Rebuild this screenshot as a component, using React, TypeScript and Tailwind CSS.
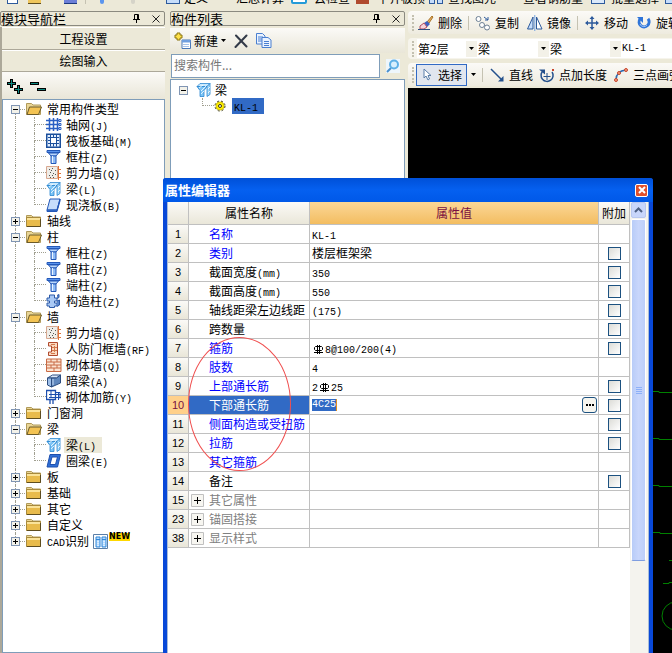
import React from 'react';
import clsx from 'clsx';

type IconName =
  | 'axis' | 'raft' | 'column' | 'shear' | 'beam' | 'slab' | 'struct'
  | 'door' | 'brick' | 'hidden' | 'rebar' | 'ring';

interface TreeItem {
  label: string;
  icon: IconName;
  selected?: boolean;
}

interface TreeGroup {
  label: string;
  items?: TreeItem[];
  isNew?: boolean;
}

interface Property {
  no: number;
  name: string;
  value?: string;
  tone?: 'blue' | 'gray';
  check?: boolean;
  group?: boolean;
  editing?: boolean;
}

const groups: TreeGroup[] = [
  {
    label: '常用构件类型',
    items: [
      { label: '轴网(J)', icon: 'axis' },
      { label: '筏板基础(M)', icon: 'raft' },
      { label: '框柱(Z)', icon: 'column' },
      { label: '剪力墙(Q)', icon: 'shear' },
      { label: '梁(L)', icon: 'beam' },
      { label: '现浇板(B)', icon: 'slab' },
    ],
  },
  { label: '轴线' },
  {
    label: '柱',
    items: [
      { label: '框柱(Z)', icon: 'column' },
      { label: '暗柱(Z)', icon: 'column' },
      { label: '端柱(Z)', icon: 'column' },
      { label: '构造柱(Z)', icon: 'struct' },
    ],
  },
  {
    label: '墙',
    items: [
      { label: '剪力墙(Q)', icon: 'shear' },
      { label: '人防门框墙(RF)', icon: 'door' },
      { label: '砌体墙(Q)', icon: 'brick' },
      { label: '暗梁(A)', icon: 'hidden' },
      { label: '砌体加筋(Y)', icon: 'rebar' },
    ],
  },
  { label: '门窗洞' },
  {
    label: '梁',
    items: [
      { label: '梁(L)', icon: 'beam', selected: true },
      { label: '圈梁(E)', icon: 'ring' },
    ],
  },
  { label: '板' },
  { label: '基础' },
  { label: '其它' },
  { label: '自定义' },
  { label: 'CAD识别', isNew: true },
];

const properties: Property[] = [
  { no: 1, name: '名称', value: 'KL-1', tone: 'blue' },
  { no: 2, name: '类别', value: '楼层框架梁', tone: 'blue', check: true },
  { no: 3, name: '截面宽度(mm)', value: '350', check: true },
  { no: 4, name: '截面高度(mm)', value: '550', check: true },
  { no: 5, name: '轴线距梁左边线距', value: '(175)', check: true },
  { no: 6, name: '跨数量', check: true },
  { no: 7, name: '箍筋', value: 'Φ8@100/200(4)', tone: 'blue', check: true },
  { no: 8, name: '肢数', value: '4', tone: 'blue' },
  { no: 9, name: '上部通长筋', value: '2Φ25', tone: 'blue', check: true },
  { no: 10, name: '下部通长筋', value: '4C25', check: true, editing: true },
  { no: 11, name: '侧面构造或受扭筋', tone: 'blue', check: true },
  { no: 12, name: '拉筋', tone: 'blue', check: true },
  { no: 13, name: '其它箍筋', tone: 'blue' },
  { no: 14, name: '备注', check: true },
  { no: 15, name: '其它属性', tone: 'gray', group: true },
  { no: 23, name: '锚固搭接', tone: 'gray', group: true },
  { no: 38, name: '显示样式', tone: 'gray', group: true },
];

const RebarSign = () => (
  <svg width="9" height="9" viewBox="0 0 9 9" className="mx-0.5 inline-block align-[-1px]" fill="none" stroke="#000" role="img" aria-label="HRB400">
    <path d="M3.500 0v9M5.500 0v9M1.500 1.500h6l1 1v2l-1 1h-6l-1-1v-2zM0 7.500h9" />
  </svg>
);

// Latin runs are set half as wide as a Chinese character
const Txt = ({ children }: { children: string }) => (
  <>
    {children.split(/([\x20-\x7e]+|Φ)/).filter(Boolean).map((part, i) =>
      part === 'Φ' ? (
        <RebarSign key={i} />
      ) : /^[\x20-\x7e]/.test(part) ? (
        <span key={i} className="font-['Liberation_Mono',monospace] text-[10px] leading-none">{part}</span>
      ) : (
        part
      )
    )}
  </>
);

const shapes: Record<IconName, React.ReactNode> = {
  axis: (
    <g stroke="#2a5fc4" fill="none">
      <path d="M3.500 1v13M7.500 1v13M11.500 1v13M0 3.500h13M0 7.500h13M0 11.500h13" strokeWidth="1.500" />
      <path d="M13 2.500h2v2h-2zM13 6.500h2v2h-2zM13 10.500h2v2h-2z" />
    </g>
  ),
  raft: (
    <g stroke="#1b4f9c" fill="none">
      <rect x=".75" y="1.250" width="13.500" height="13" fill="#e4f0ff" strokeWidth="1.500" />
      <rect x="4.500" y="4.500" width="6" height="6" fill="#fff" />
      <path d="M4.500 2v2M7.500 2v2M10.500 2v2M4.500 11v2.500M7.500 11v2.500M10.500 11v2.500M2 4.500h2M2 7.500h2M2 10.500h2M11 4.500h2M11 7.500h2M11 10.500h2" />
    </g>
  ),
  column: (
    <g stroke="#2458b8">
      <path d="M1 1.500h13v2H1z" fill="#5b95ee" />
      <path d="M2.500 4h10l-2.500 3H5z" fill="#b9d6fb" />
      <path d="M5 7h5v7.500H5z" fill="#8fbcf7" />
      <path d="M6.500 7v7" stroke="#eaf4ff" />
    </g>
  ),
  shear: (
    <g>
      <path d="M.5 1.500h11v12H.5z" fill="#efede8" stroke="#d8a890" />
      <path d="M3 4.500h1M6 3.500h1M9 5.500h1M4 7.500h1M7 8.500h1M3 10.500h1M6 10.500h1M9 9.500h1M4 12.500h1M7 12.500h1M5 5.500h1" stroke="#555" />
      <path d="M12.500 1v14M12 4.500h3M12 8.500h3M12 12.500h3" stroke="#e0743a" fill="none" />
    </g>
  ),
  beam: (
    <g stroke="#2a86d0" strokeWidth=".8">
      <path d="M1 4.500l3-3h10l-3 3z" fill="#c9e9fd" />
      <path d="M1 4.500h10l-3 4v6H4v-6z" fill="#7cc4f5" />
      <path d="M11 4.500l3-3v11l-3 2z" fill="#a6dafa" />
      <path d="M3 6l4-3M5 9l5-5M5 12l3-3M12 7l2-2M12 11l2-2" stroke="#fff" fill="none" />
    </g>
  ),
  slab: (
    <g stroke="#2458b8">
      <path d="M4 2h10l-3 11H1z" fill="#c6ddfb" />
      <path d="M1 13v1.500h10L14 4V2l-3 11z" fill="#3b74d0" />
    </g>
  ),
  struct: (
    <g stroke="#2d5aa8">
      <path d="M3.500 2h5v3H11v3H8.500v2H11v3H8.500v1.500h-5V13H1v-3h2.500V8H1V5h2.500z" fill="#a9c9f5" />
      <path d="M11 2.500l2-1v3l-2 1M11 8l2.500-1v5L11 13.500" fill="#5b86cc" />
    </g>
  ),
  door: (
    <g stroke="#b04a2e">
      <path d="M2.500 1.500h9V14.500h-9v-3.500h3V5h-3z" fill="#fbd9c0" />
      <path d="M5 3.500h4M5 12.500h4M8.500 5v6M6 6.500h5M6 9.500h5" stroke="#d47a4e" />
    </g>
  ),
  brick: (
    <g stroke="#c86a45">
      <path d="M.5 2h14.500v12.500H.5z" fill="#fbe3d0" />
      <path d="M.5 5h14.500M.5 8h14.500M.5 11h14.500M5 2v3M11 2v3M8 5v3M5 8v3M11 8v3M8 11v3" />
    </g>
  ),
  hidden: (
    <g stroke="#2c4d80">
      <path d="M1.500 5l5-3h8l-4 3z" fill="#dbe9fa" />
      <path d="M1.500 5h4v9l-4-2z" fill="#9fc0ea" />
      <path d="M5.500 5h5l4-3v8l-9 4z" fill="#5f87bd" />
      <path d="M7 6v6" stroke="#c7dbf5" />
    </g>
  ),
  rebar: (
    <g stroke="#1d4fae" fill="none">
      <path d="M.5 1.500h9v9h-9zM4 10v5M7 10v5" strokeWidth="1.300" />
      <path d="M3 5.500h12M5 1v8M3 8.500h12M10 3.500h4v6M12.500 3v8" />
    </g>
  ),
  ring: (
    <g stroke="#1d4fae">
      <path d="M4 1.500h10.500l-3 12.500H1z" fill="#2f6fd6" />
      <path d="M6 4h5.500L9.500 11.500H4z" fill="#fff" />
    </g>
  ),
};

const Icon = ({ name }: { name: IconName }) => (
  <svg width="16" height="16" viewBox="0 0 16 16" className="shrink-0">{shapes[name]}</svg>
);

const Folder = ({ open }: { open?: boolean }) => (
  <svg width="16" height="16" viewBox="0 0 16 16" className="shrink-0">
    <path d="M.5 13.500v-11h5l1.500 1.500h7.500v9.500z" fill="#e9d595" stroke="#b09a5a" />
    {open ? (
      <path d="M3.500 6h12l-3 7.500H1z" fill="#f3c353" stroke="#6b5a2a" />
    ) : (
      <>
        <path d="M.5 4.500h14v9H.5z" fill="#e8bb4c" stroke="#a88a3c" />
        <path d="M1 5h13v2H1z" fill="#fae39a" />
        <path d="M1 13.500h13.500V6" fill="none" stroke="#5e4d20" />
      </>
    )}
  </svg>
);

const Expander = ({ open }: { open?: boolean }) => (
  <svg width="9" height="9" viewBox="0 0 9 9" className="shrink-0">
    <rect x=".5" y=".5" width="8" height="8" fill="#f3f2ea" stroke="#8095b3" />
    <path d={open ? 'M2 4.500h5' : 'M2 4.500h5M4.500 2v5'} stroke="#000" />
  </svg>
);

const Elbow = ({ last }: { last: boolean }) => (
  <div className="w-3 shrink-0">
    <div className="h-2 border-b border-l border-dotted border-[#a09f90]" />
    <div className={clsx('h-2', !last && 'border-l border-dotted border-[#a09f90]')} />
  </div>
);

const Group = ({ group, first, last }: { group: TreeGroup; first: boolean; last: boolean }) => (
  <li>
    <div className="flex h-4 items-center">
      <div className="flex h-4 w-[9px] flex-col items-center">
        <i className={clsx('flex-1', !first && 'border-l border-dotted border-[#a09f90]')} />
        <Expander open={!!group.items} />
        <i className={clsx('flex-1', !last && 'border-l border-dotted border-[#a09f90]')} />
      </div>
      <i className="mr-px w-[5px] border-t border-dotted border-[#a09f90]" />
      <Folder open={!!group.items} />
      <span className="ml-[5px] h-4"><Txt>{group.label}</Txt></span>
      {group.isNew && (
        <>
          <svg width="15" height="15" viewBox="0 0 15 15" className="ml-1">
            <path d="M.5.5h14v14H.5z" fill="#fff" stroke="#5a7fa8" />
            <path d="M3 3h4v10H3zM9 3h4v10H9zM3 5.500h4M9 5.500h4" fill="#b8dcff" stroke="#2f86d8" />
            <path d="M5 7v5M11 7v5" stroke="#fff" strokeDasharray="1 1" />
          </svg>
          <span className="ml-px self-start bg-[#ffd800] font-['DejaVu_Sans',sans-serif] text-[8px] leading-2 font-bold">NEW</span>
        </>
      )}
    </div>
    {group.items && (
      <ul>
        {group.items.map((item, i) => (
          <li key={i} className="flex h-4 items-center">
            <div className="flex h-4 w-[9px] justify-center">
              <i className="border-l border-dotted border-[#a09f90]" />
            </div>
            <div className="w-3.5" />
            <Elbow last={i === group.items!.length - 1} />
            <Icon name={item.icon} />
            <span className={clsx('ml-0.5 h-4 px-0.5', item.selected && 'bg-[#ece9d8] pr-1.5')}>
              <Txt>{item.label}</Txt>
            </span>
          </li>
        ))}
      </ul>
    )}
  </li>
);

const PanelTitle = ({ children }: { children: string }) => (
  <div className="flex h-[15px] items-center justify-end rounded-xs border border-[#8b8a80]">
    <h2 className="mr-auto text-[13px] leading-3">{children}</h2>
    <button type="button" aria-label="固定" className="mr-3">
      <svg width="7" height="9" viewBox="0 0 7 9" fill="none" stroke="#000">
        <path d="M1.500 5V.5h4V5M4.500 0v5M0 5.500h7M3.500 6v3" />
      </svg>
    </button>
    <button type="button" aria-label="关闭" className="mr-1">
      <svg width="8" height="8" viewBox="0 0 8 8" stroke="#222"><path d="M.5.5l7 7M7.500.5l-7 7" /></svg>
    </button>
  </div>
);

const Arrow = () => (
  <svg width="5" height="3" viewBox="0 0 5 3" className="shrink-0"><path d="M0 0h5L2.500 3z" /></svg>
);

const Grip = () => (
  <i className="ml-1 h-4 w-0 shrink-0 border-l-2 border-dotted border-[#c3c0b0]" />
);

const Divider = ({ className }: { className?: string }) => (
  <i className={clsx('h-3.5 w-px shrink-0 bg-[#c5c2b2]', className)} />
);

const Tool = ({ icon, label, className }: { icon: React.ReactNode; label: string; className?: string }) => (
  <button type="button" className={clsx('flex shrink-0 items-center gap-1', className)}>
    <svg width="16" height="16" viewBox="0 0 16 16" fill="none">{icon}</svg>
    {label}
  </button>
);

const Combo = ({ label, value, className }: { label: string; value: string; className?: string }) => (
  <div className={clsx('flex h-[19px] shrink-0 items-center bg-white', className)}>
    <select aria-label={label} className="h-full min-w-0 flex-1 appearance-none pl-px">
      <option>{value}</option>
    </select>
    <span className="flex h-4 w-[11px] items-center justify-center bg-[#f3f1e8]"><Arrow /></span>
  </div>
);

const TopStrip = () => (
  <div className="flex h-1 shrink-0 items-end overflow-hidden leading-3 whitespace-nowrap">
    <i className="ml-[7px] h-3 w-[11px] shrink-0 border border-[#2d5a9c] bg-white" />
    <i className="ml-2.5 h-3 w-[13px] shrink-0 border-b border-[#5e4d20] bg-[#efc65c]" />
    <i className="ml-[23px] h-3 w-[13px] shrink-0 border-b border-[#1c3a80] bg-[#6c7fd8]" />
    <i className="ml-2 h-3 w-px shrink-0 bg-[#c5c2b2]" />
    <i className="ml-[14px] h-3 w-1 shrink-0 rounded-b bg-[#5b95ee]" />
    <i className="ml-[27px] h-3 w-1 shrink-0 rounded-b bg-[#d5d3c8]" />
    <i className="ml-[31px] h-3 w-3.5 shrink-0 border border-[#2d5a9c] bg-[#c6ddfb]" />
    <span className="ml-1">定义</span>
    <span className="ml-7">汇总计算</span>
    <i className="ml-[7px] h-3 w-4 shrink-0 rounded-b-xs border-2 border-[#249bd8] bg-white" />
    <span className="ml-[7px]">云检查</span>
    <i className="ml-1.5 h-3 w-[13px] shrink-0 bg-[#b04a2e]" />
    <span className="ml-2">平齐板顶</span>
    <i className="ml-1 h-3 w-1.5 shrink-0 border border-[#2d5a9c] bg-[#c6ddfb]" />
    <i className="ml-0.5 h-3 w-1.5 shrink-0 border border-[#2d5a9c] bg-[#c6ddfb]" />
    <span className="ml-[5px]">查找图元</span>
    <span className="ml-[27px]">查看钢筋量</span>
    <i className="ml-2 h-3 w-3.5 shrink-0 border border-[#2d5a9c] bg-[#dbe9fa]" />
    <span className="ml-1.5">批量选择</span>
    <i className="ml-1.5 h-3 w-3.5 shrink-0 border border-[#2d5a9c] bg-[#c6ddfb]" />
  </div>
);

const Navigator = () => (
  <aside className="flex w-[165px] shrink-0 flex-col">
    <PanelTitle>模块导航栏</PanelTitle>
    <div className="mt-px flex flex-1 flex-col border-l-2 border-[#aca899]">
      <button type="button" className="h-[23px] border-y border-t-white border-b-[#aca899]">工程设置</button>
      <button type="button" className="h-[22px] border-y border-t-white border-b-[#aca899]">绘图输入</button>
      <div className="flex h-[27px] items-center bg-linear-to-b from-[#fbfaf7] to-[#e9e6d8] pl-1">
        <button type="button" aria-label="全部展开">
          <svg width="18" height="16" viewBox="0 0 18 16">
            <path d="M5.500 1v9M1 5.500h9M12.500 7v9M8 11.500h9" stroke="#000" strokeWidth="3" />
            <path d="M5.500 2v7M2 5.500h7M12.500 8v7M9 11.500h7" stroke="#0b8a80" />
          </svg>
        </button>
        <button type="button" aria-label="全部折叠" className="ml-1.5">
          <svg width="17" height="16" viewBox="0 0 17 16">
            <path d="M0 5.500h9M7 11.500h9" stroke="#000" strokeWidth="3" />
            <path d="M1 5.500h7M8 11.500h7" stroke="#0b8a80" />
          </svg>
        </button>
      </div>
      <ul className="flex-1 border border-[#7f9db9] bg-white pt-px pl-2 leading-4 whitespace-nowrap">
        {groups.map((g, i) => (
          <Group key={g.label} group={g} first={i === 0} last={i === groups.length - 1} />
        ))}
      </ul>
    </div>
  </aside>
);

const ComponentList = () => (
  <section className="ml-[5px] flex w-[235px] shrink-0 flex-col">
    <PanelTitle>构件列表</PanelTitle>
    <div className="mt-0.5 flex h-[25px] items-center bg-linear-to-b from-[#fbfaf7] to-[#e9e6d8] pl-1">
      <button type="button" className="flex items-center">
        <svg width="17" height="17" viewBox="0 0 17 17">
          <path d="M3 1h3v2h2v3H6v2H3V6H1V3h2z" fill="#ffe14a" stroke="#8a7410" />
          <path d="M8 8h8.500v8.500H8z" fill="#fff" stroke="#4a78b8" />
          <path d="M8 8h8.500v2.500H8z" fill="#6f9fe0" />
          <path d="M9 12.500h6M9 14.500h6" stroke="#a8c4ea" />
        </svg>
        <span className="mr-[3px] ml-[3px]">新建</span>
        <Arrow />
      </button>
      <button type="button" aria-label="删除构件" className="ml-2">
        <svg width="14" height="14" viewBox="0 0 14 14" stroke="#333a48" strokeWidth="2" strokeLinecap="round">
          <path d="M2 1.500l10.500 11M12.500 1.500L1.500 13" />
        </svg>
      </button>
      <button type="button" aria-label="复制构件" className="ml-2">
        <svg width="16" height="15" viewBox="0 0 16 15" fill="#eaf3ff" stroke="#4a7fd0">
          <path d="M.5.5h6L9 3v8H.5z" />
          <path d="M2 4h5M2 6h5M2 8h5" />
          <path d="M6 4.500h6L15 7v7.500H6z" />
          <path d="M8 8.500h5M8 10.500h5M8 12.500h5" />
        </svg>
      </button>
    </div>
    <div className="flex h-[26px] items-center pl-px">
      <input
        type="search"
        aria-label="搜索构件"
        placeholder="搜索构件..."
        className="h-6 min-w-0 flex-1 border border-[#7f9db9] bg-white px-0.5 pb-1 outline-none placeholder:text-[#777]"
      />
      <button type="button" aria-label="搜索" className="flex h-6 w-[25px] items-center justify-center">
        <svg width="14" height="14" viewBox="0 0 14 14">
          <path d="M0 0h14v14H0z" fill="#eef6fc" />
          <path d="M5 9l-4 4" stroke="#4a90cc" strokeWidth="2" />
          <circle cx="8" cy="5.500" r="4" fill="#d8effd" stroke="#5fb0e6" strokeWidth="2" />
        </svg>
      </button>
    </div>
    <ul className="flex-1 border border-[#7f9db9] bg-white pt-0.5 pl-2 leading-4">
      <li className="flex h-4 items-center">
        <Expander open />
        <span className="ml-2 flex"><Icon name="beam" /></span>
        <span className="ml-[3px]">梁</span>
      </li>
      <li className="flex h-4 items-center pl-[23px]">
        <Elbow last />
        <svg width="12" height="12" viewBox="0 0 12 12" stroke="#3c380a">
          <circle cx="6" cy="6" r="4" fill="#ffee00" stroke="#d8c800" />
          <circle cx="6" cy="6" r="5" fill="none" strokeDasharray="2 2" />
          <circle cx="6" cy="6" r="1.500" fill="#fff" />
        </svg>
        <span className="ml-1.5 h-4 bg-[#316ac5] pr-1.5 pl-0.5"><Txt>KL-1</Txt></span>
      </li>
    </ul>
  </section>
);

const Toolbars = () => (
  <div className="flex flex-col gap-1 pb-0.5 whitespace-nowrap">
    <div className="flex h-[23px] items-center rounded-l bg-linear-to-b from-[#fbfaf7] to-[#eeebdf]">
      <Grip />
      <Tool
        className="ml-1"
        label="删除"
        icon={
          <>
            <path d="M9 7l5-6 1 1-4 6z" fill="#e8b060" stroke="#a8742c" />
            <path d="M6 8l3-2 3 3-3 3z" fill="#3b5fc0" />
            <path d="M2 11l4-3 3 4-3 2H2z" fill="#f6d4dc" stroke="#b04a5e" />
            <path d="M0 14.500h12" stroke="#2c4d80" />
          </>
        }
      />
      <Divider className="mx-1.5" />
      <Tool
        label="复制"
        icon={
          <g stroke="#6d8094">
            <circle cx="3.500" cy="4" r="2.500" fill="#fff" />
            <circle cx="7" cy="10" r="2.500" fill="#fff" />
            <circle cx="12" cy="12.500" r="2.500" fill="#fff" />
            <path d="M9 2l4 3M13 2v3h-3" stroke="#2d5a9c" />
          </g>
        }
      />
      <Tool
        className="ml-2"
        label="镜像"
        icon={
          <g stroke="#2d5a9c">
            <path d="M6 2v12H.5z" fill="#c6ddfb" />
            <path d="M9.500 2v12H15z" fill="#fff" />
            <path d="M7.800 0v16" stroke="#6fa0e0" />
          </g>
        }
      />
      <Divider className="mx-1.5" />
      <Tool
        label="移动"
        icon={
          <>
            <path d="M8 2v12M2 8h12" stroke="#2d5a9c" strokeWidth="1.500" />
            <path d="M5.500 4L8 1l2.500 3zM5.500 12L8 15l2.500-3zM4 5.500L1 8l3 2.500zM12 5.500L15 8l-3 2.500z" fill="#2d5a9c" />
          </>
        }
      />
      <Tool
        className="ml-2"
        label="旋转"
        icon={
          <>
            <path d="M4 4a5 5 0 1 0 8-.2" stroke="#2f74d8" strokeWidth="3" />
            <path d="M1 2h6v6z" fill="#2f74d8" />
            <path d="M4 9a4 4 0 0 0 7 1" stroke="#9cc4f8" />
          </>
        }
      />
    </div>
    <div className="flex h-[21px] items-center rounded-l bg-[#f6f4ec]">
      <Grip />
      <Combo label="楼层" value="第2层" className="ml-[3px] w-[60px]" />
      <Combo label="构件类型" value="梁" className="w-[72px]" />
      <Combo label="构件种类" value="梁" className="w-[72px]" />
      <Combo label="构件名称" value="KL-1" className="w-[120px] font-['Liberation_Mono',monospace] text-[10px]" />
    </div>
    <div className="flex h-[23px] items-center rounded-l bg-linear-to-b from-[#fbfaf7] to-[#eeebdf]">
      <Grip />
      <button type="button" className="ml-0.5 flex h-[22px] w-[51px] shrink-0 items-center gap-1.5 border border-[#316ac5] bg-[#e1e6ef] pl-1.5">
        <svg width="9" height="13" viewBox="0 0 9 13"><path d="M1 1v9l2-2 2 4 1.500-1L5 7.500h3z" fill="#fff" stroke="#5a7ea8" /></svg>
        选择
      </button>
      <span className="ml-1 flex"><Arrow /></span>
      <Divider className="ml-1.5" />
      <Tool
        className="ml-1.5"
        label="直线"
        icon={
          <>
            <path d="M2 2l10 10" stroke="#24508c" strokeWidth="1.500" />
            <path d="M14.500 9v5.500H9z" fill="#24508c" />
          </>
        }
      />
      <Tool
        className="ml-1.5"
        label="点加长度"
        icon={
          <>
            <path d="M4 4a6 6 0 1 0 9 1" stroke="#24508c" strokeWidth="1.500" />
            <path d="M0 2.500h6v5z" fill="#24508c" />
            <path d="M8 6v7M4.500 9.500h7" stroke="#24508c" />
            <path d="M13 2h2v2h-2z" fill="#c8452c" />
          </>
        }
      />
      <Tool
        className="ml-1.5"
        label="三点画弧"
        icon={
          <>
            <path d="M3 13Q3 4 13 3" stroke="#2d6ab0" strokeWidth="1.500" />
            <g fill="#f29a7c" stroke="#c8452c">
              <circle cx="3" cy="13" r="1.500" />
              <circle cx="6" cy="6" r="1.500" />
              <circle cx="13" cy="3" r="1.500" />
            </g>
          </>
        }
      />
    </div>
  </div>
);

const Canvas = () => (
  <div className="relative flex-1 overflow-hidden bg-black">
    <svg className="absolute inset-0 h-full w-full" fill="none" stroke="#008000">
      <path d="M244 303.500h7v1h30M244 350.500h7v1h30M244 397.500h7v1h30M244 444.500h8v1h30M261 472.500h12M255 495.500h6v-1h9" />
      <circle cx="268" cy="528" r="14" />
    </svg>
  </div>
);

const PropertyRow = ({ p }: { p: Property }) => (
  <tr className="h-[19px]">
    <th
      scope="row"
      className={clsx(
        'border-r border-b border-[#c0c0c0] p-0 text-center font-["Liberation_Sans",sans-serif] text-[11px] font-normal',
        p.editing ? 'bg-[#ffd08a] text-[#7a1040]' : 'bg-linear-to-b from-[#fbfaf7] to-[#e9e6d8]'
      )}
    >
      {p.no}
    </th>
    <td
      className={clsx(
        'border-r border-b border-[#c0c0c0] p-0',
        p.editing && 'bg-[#316ac5] text-white',
        p.tone === 'blue' && 'text-[#0000ff]',
        p.tone === 'gray' && 'text-[#808080]'
      )}
    >
      <div className="flex h-4 items-center whitespace-nowrap">
        <span className="flex w-5 shrink-0 items-center pl-0.5">
          {p.group && (
            <button type="button" aria-label={`展开${p.name}`}>
              <svg width="13" height="13" viewBox="0 0 13 13">
                <path d="M.5.5h12v12H.5z" fill="#f7f6f1" stroke="#c0c0c0" />
                <path d="M3 6.500h7M6.500 3v7" stroke="#000" />
              </svg>
            </button>
          )}
        </span>
        <span className="h-4"><Txt>{p.name}</Txt></span>
      </div>
    </td>
    <td className="border-r border-b border-[#c0c0c0] p-0 pl-0.5 whitespace-nowrap">
      {p.editing ? (
        <div className="flex h-4 items-center justify-between pr-px">
          <input
            aria-label={p.name}
            defaultValue={p.value}
            className="h-3 w-[25px] border-r border-[#e09020] bg-[#316ac5] font-['Liberation_Mono',monospace] text-[10px] text-white outline-none"
          />
          <button type="button" aria-label="更多" className="flex h-4 w-[15px] items-center justify-center gap-px rounded-[3px] border border-[#1c5180] bg-[#f6f5ef]">
            <i className="size-0.5 bg-black" />
            <i className="size-0.5 bg-black" />
            <i className="size-0.5 bg-black" />
          </button>
        </div>
      ) : (
        p.value && <div className="h-4"><Txt>{p.value}</Txt></div>
      )}
    </td>
    <td className="border-r border-b border-[#c0c0c0] p-0">
      {p.check && (
        <input
          type="checkbox"
          aria-label={`附加${p.name}`}
          className="mx-auto block size-[13px] appearance-none border border-[#1c5180] bg-linear-to-br from-[#dcdcd7] to-white"
        />
      )}
    </td>
  </tr>
);

const PropertyEditor = () => (
  <section className="absolute top-[178px] bottom-0 left-[163px] flex w-[490px] flex-col overflow-hidden rounded-t-[3px] bg-[#0848d8]">
    <header className="flex h-6 shrink-0 items-center justify-between bg-linear-to-b from-[#0050d8] via-[#0560f0] to-[#0058e8] pr-[5px] pl-0.5">
      <h2 className="text-[13px] leading-4 font-bold text-white">属性编辑器</h2>
      <button type="button" aria-label="关闭" className="flex size-[13px] items-center justify-center rounded-xs border border-white bg-[#e0502c]">
        <svg width="8" height="8" viewBox="0 0 8 8" stroke="#fff" strokeWidth="2"><path d="M1 1l6 6M7 1L1 7" /></svg>
      </button>
    </header>
    <div className="mr-1 ml-1 flex min-h-0 flex-1 border-x border-[#a8bcd8] bg-white">
      <div className="min-w-0 flex-1">
        <table className="w-full table-fixed border-separate border-spacing-0 leading-4">
          <colgroup>
            <col className="w-[21px]" />
            <col className="w-[121px]" />
            <col />
            <col className="w-[31px]" />
          </colgroup>
          <thead>
            <tr className="h-[23px] bg-linear-to-b from-[#fbfaf7] to-[#e9e6d8]">
              <td className="border-r border-b border-[#c0c0c0] p-0" />
              <th className="border-r border-b border-[#c0c0c0] p-0 font-normal">属性名称</th>
              <th className="border-r border-b border-[#c0c0c0] bg-linear-to-b from-[#fbd796] to-[#f3bd60] p-0 font-normal text-[#7a1040]">属性值</th>
              <th className="border-r border-b border-[#c0c0c0] p-0 font-normal">附加</th>
            </tr>
          </thead>
          <tbody>
            {properties.map((p) => <PropertyRow key={p.no} p={p} />)}
          </tbody>
        </table>
      </div>
      <div className="flex w-[18px] shrink-0 flex-col bg-[#f4f3ee] pr-0.5 pl-px">
        <button type="button" aria-label="向上滚动" className="flex h-4 items-center justify-center rounded-xs border border-[#b8c8f0] bg-[#c8d6fb]">
          <svg width="9" height="6" viewBox="0 0 9 6" fill="none" stroke="#4d6185" strokeWidth="2"><path d="M1 5l3.500-3.500L8 5" /></svg>
        </button>
        <div className="mt-px flex h-[342px] flex-col items-center justify-center gap-px rounded-xs border border-white border-b-[#7f9de0] bg-linear-to-r from-[#b8ccf8] via-[#c8d6fb] to-[#bccffa]">
          <i className="h-px w-1.5 bg-[#8cb0f8]" />
          <i className="h-px w-1.5 bg-[#8cb0f8]" />
          <i className="h-px w-1.5 bg-[#8cb0f8]" />
          <i className="h-px w-1.5 bg-[#8cb0f8]" />
        </div>
      </div>
    </div>
    <div className="pointer-events-none absolute top-[159px] left-[25px] h-[134px] w-[103px] rounded-[50%] border border-[#f05050]" />
  </section>
);

export default function App() {
  return (
    <main className="relative flex h-screen flex-col overflow-hidden bg-[#ece9d8] font-['Noto_Sans_CJK_SC',sans-serif] text-xs text-black">
      <TopStrip />
      <div className="flex min-h-0 flex-1 pt-[7px]">
        <Navigator />
        <ComponentList />
        <div className="ml-[3px] flex min-w-0 flex-1 flex-col overflow-hidden">
          <Toolbars />
          <Canvas />
        </div>
      </div>
      <PropertyEditor />
    </main>
  );
}
